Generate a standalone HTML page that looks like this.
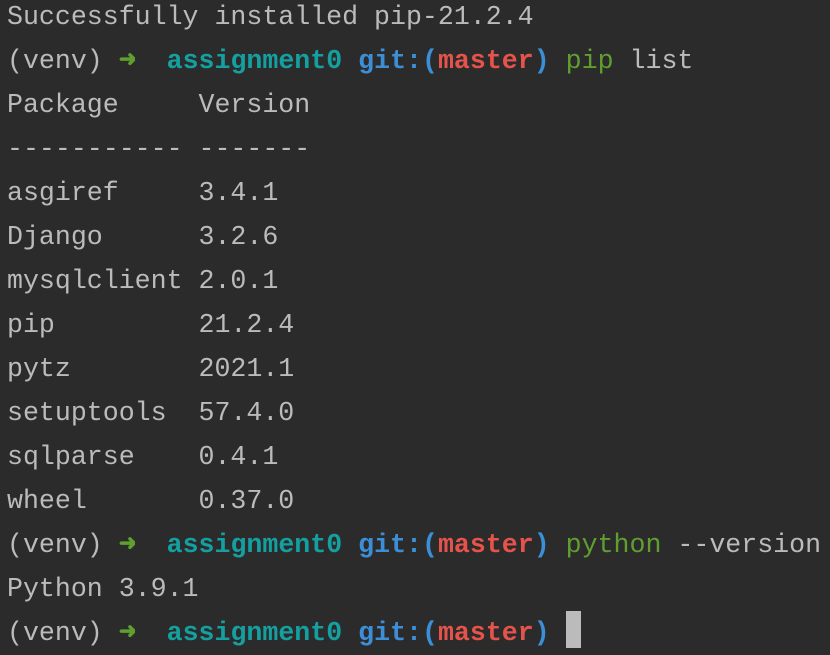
<!DOCTYPE html>
<html><head><style>
html,body{margin:0;padding:0;background:#2b2b2b;width:830px;height:648px;overflow:hidden}
pre{margin:0;position:absolute;left:7px;top:-5px;font-family:"Liberation Mono",monospace;font-size:26.6px;line-height:44px;color:#bbbbbb}
.g{color:#5f9e2f;font-weight:bold;display:inline-block;width:0.6em;overflow:hidden;font-size:22px;vertical-align:top}
.c{color:#14a0a0;font-weight:bold}
.b{color:#3c8fd6;font-weight:bold}
.r{color:#e5534b;font-weight:bold}
.gr{color:#5f9e2f}
.cur{position:absolute;left:566px;top:611px;width:15px;height:37px;background:#bbbbbb}
</style></head><body>
<pre>Successfully installed pip-21.2.4
(venv) <span class="g" style="width:16px">➜</span>  <span class="c">assignment0</span> <span class="b">git:(</span><span class="r">master</span><span class="b">)</span> <span class="gr">pip</span> list
Package     Version
----------- -------
asgiref     3.4.1
Django      3.2.6
mysqlclient 2.0.1
pip         21.2.4
pytz        2021.1
setuptools  57.4.0
sqlparse    0.4.1
wheel       0.37.0
(venv) <span class="g" style="width:16px">➜</span>  <span class="c">assignment0</span> <span class="b">git:(</span><span class="r">master</span><span class="b">)</span> <span class="gr">python</span> --version
Python 3.9.1
(venv) <span class="g" style="width:16px">➜</span>  <span class="c">assignment0</span> <span class="b">git:(</span><span class="r">master</span><span class="b">)</span></pre>
<div class="cur"></div>
</body></html>
